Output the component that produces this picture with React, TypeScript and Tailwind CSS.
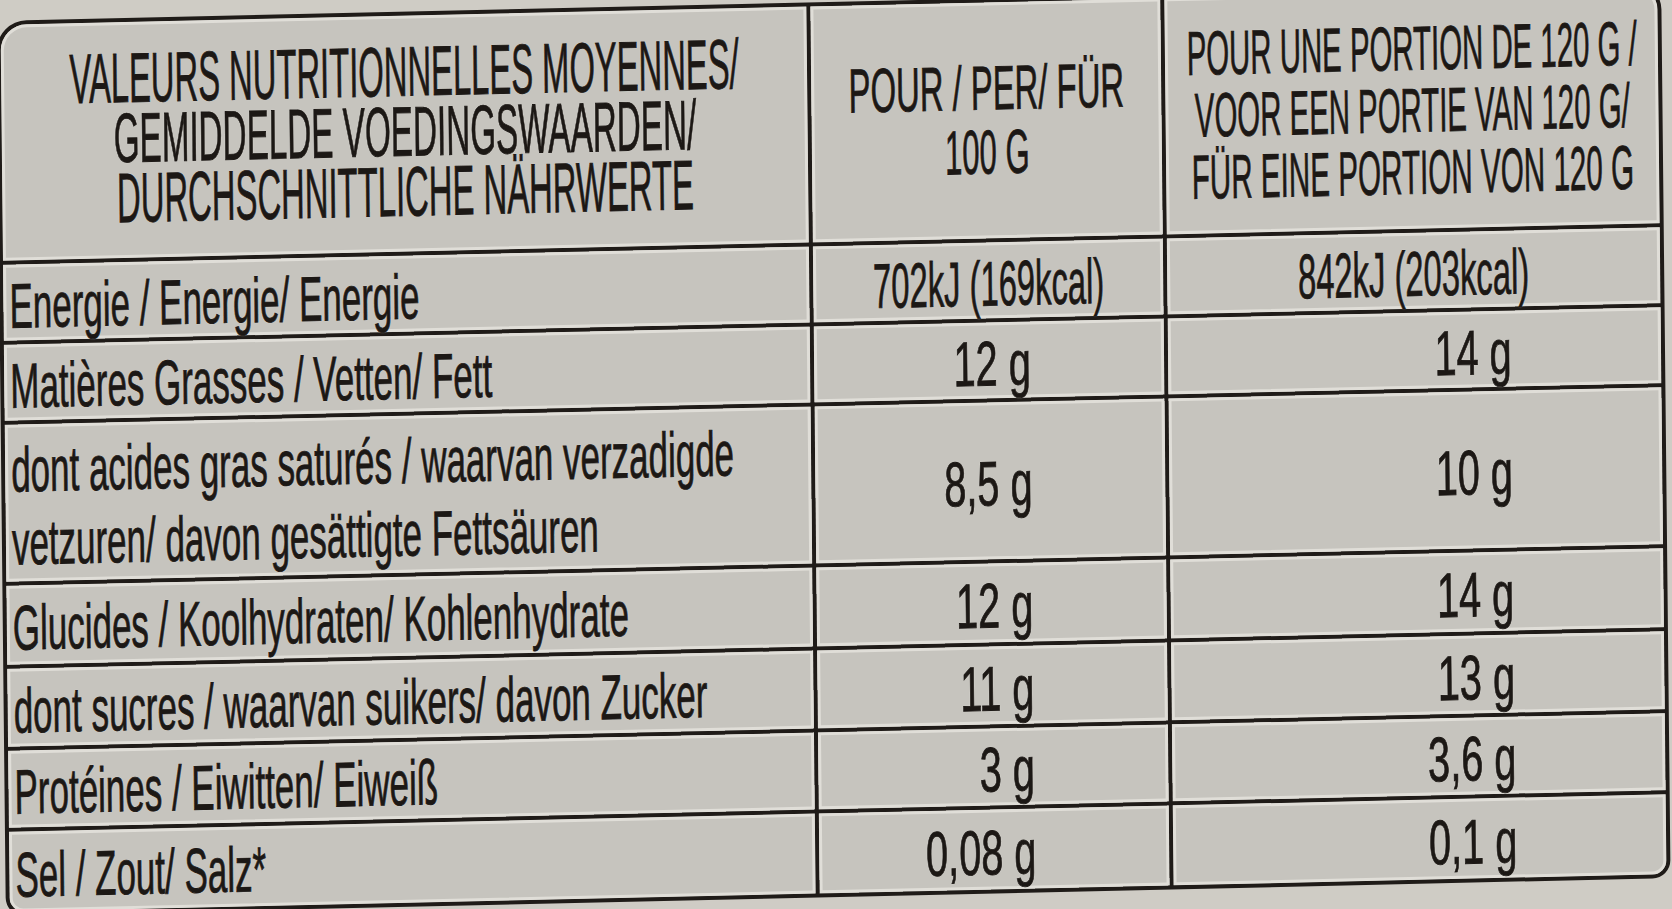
const rows = [
  { label: ['Energie / Energie/ Energie'], a: '702kJ (169kcal)', b: '842kJ (203kcal)', energy: true },
  { label: ['Matières Grasses / Vetten/ Fett'], a: '12 g', b: '14 g' },
  {
    label: ['dont acides gras saturés / waarvan verzadigde', 'vetzuren/ davon gesättigte Fettsäuren'],
    a: '8,5 g',
    b: '10 g',
  },
  { label: ['Glucides / Koolhydraten/ Kohlenhydrate'], a: '12 g', b: '14 g' },
  { label: ['dont sucres / waarvan suikers/ davon Zucker'], a: '11 g', b: '13 g' },
  { label: ['Protéines / Eiwitten/ Eiweiß'], a: '3 g', b: '3,6 g' },
  { label: ['Sel / Zout/ Salz*'], a: '0,08 g', b: '0,1 g' },
];

const cell = 'bg-[#c6c4be] shadow-[inset_0_0_0_3px_#e0ded8]';

export default function App() {
  return (
    <div className="w-[1672px] h-[909px] overflow-hidden bg-[#cfccc5] font-['Liberation_Sans',Arial,sans-serif] text-[#1c1815] [-webkit-text-stroke:0.9px_#1c1815] [text-shadow:0_0_2px_rgba(236,234,228,0.9)]">
      <div className="ml-[1px] mt-[2px] w-[1665px] h-[895px] rotate-[-0.6deg] skew-y-[-0.7deg] rounded-tl-[30px] rounded-tr-[26px] rounded-bl-[18px] rounded-br-[18px] bg-[#1f1b18] p-[4px] grid grid-cols-[806px_350px_493px] grid-rows-[236px_76px_76px_157px_79px_78px_77px_80px] gap-[4px] overflow-hidden">
        {/* header */}
        <div className={`${cell} rounded-tl-[26px] flex flex-col items-center justify-center pb-[4px] text-[70px] leading-[60px]`}>
          <span className="whitespace-nowrap scale-x-[0.468]">VALEURS NUTRITIONNELLES MOYENNES/</span>
          <span className="whitespace-nowrap scale-x-[0.475]">GEMIDDELDE VOEDINGSWAARDEN/</span>
          <span className="whitespace-nowrap scale-x-[0.469]">DURCHSCHNITTLICHE NÄHRWERTE</span>
        </div>
        <div className={`${cell} flex flex-col items-center justify-center text-[62px] leading-[64px]`}>
          <span className="whitespace-nowrap scale-x-[0.53]">POUR / PER/ FÜR</span>
          <span className="whitespace-nowrap scale-x-[0.5]">100 G</span>
        </div>
        <div className={`${cell} rounded-tr-[22px] flex flex-col items-center justify-center text-[62px] leading-[62px]`}>
          <span className="whitespace-nowrap scale-x-[0.474]">POUR UNE PORTION DE 120 G /</span>
          <span className="whitespace-nowrap scale-x-[0.474]">VOOR EEN PORTIE VAN 120 G/</span>
          <span className="whitespace-nowrap scale-x-[0.478]">FÜR EINE PORTION VON 120 G</span>
        </div>

        {rows.map((row, i) => {
          const last = i === rows.length - 1;
          return (
            <div key={i} className="contents">
              <div
                className={`${cell} ${last ? 'rounded-bl-[14px]' : ''} flex flex-col justify-center pl-[6px] pt-[6px] text-[63px] leading-[73px]`}
              >
                {row.label.map((line) => (
                  <span key={line} className="block whitespace-nowrap origin-left scale-x-[0.555]">
                    {line}
                  </span>
                ))}
              </div>
              <div
                className={`${cell} flex items-center pt-[6px] text-[63px] leading-none ${
                  row.energy ? 'justify-center' : 'justify-end pr-[133px]'
                }`}
              >
                <span
                  className={`whitespace-nowrap ${row.energy ? 'scale-x-[0.52]' : 'origin-right scale-x-[0.63]'}`}
                >
                  {row.a}
                </span>
              </div>
              <div
                className={`${cell} ${last ? 'rounded-br-[14px]' : ''} flex items-center pt-[6px] text-[63px] leading-none ${
                  row.energy ? 'justify-center' : 'justify-end pr-[149px]'
                }`}
              >
                <span
                  className={`whitespace-nowrap ${row.energy ? 'scale-x-[0.52]' : 'origin-right scale-x-[0.63]'}`}
                >
                  {row.b}
                </span>
              </div>
            </div>
          );
        })}
      </div>
    </div>
  );
}
